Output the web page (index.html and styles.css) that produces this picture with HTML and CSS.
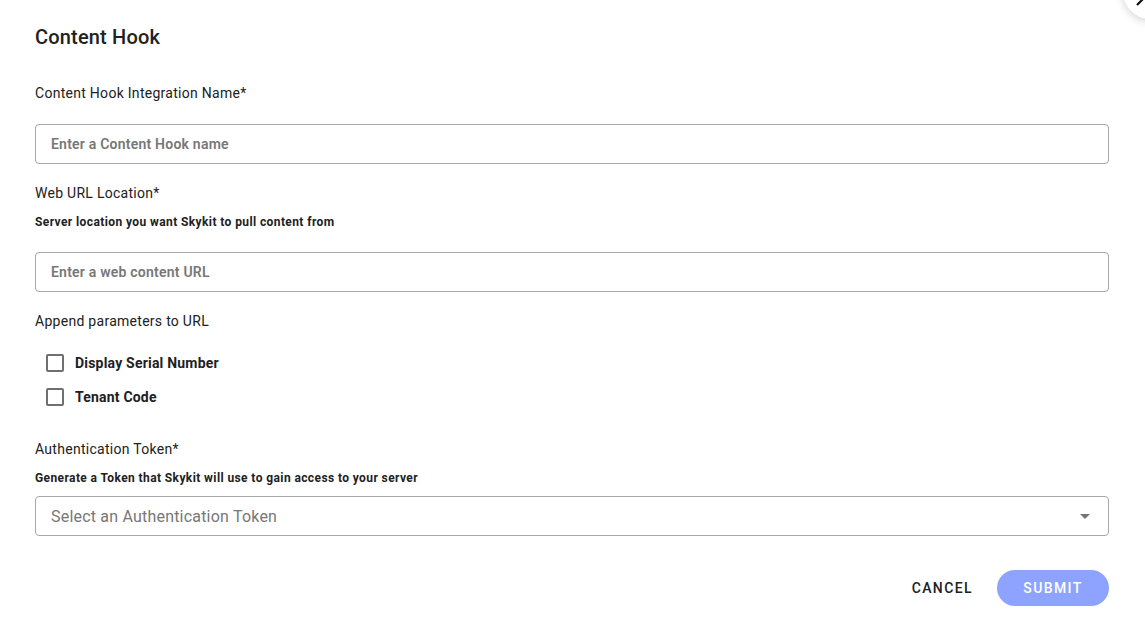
FILE: index.html
```html
<!DOCTYPE html>
<html lang="en">
<head>
<meta charset="utf-8">
<title>Content Hook</title>
<link rel="stylesheet" href="styles.css">
</head>
<body>
<div class="dialog">
  <h1 class="title">Content Hook</h1>

  <label class="label label-first">Content Hook Integration Name*</label>
  <div class="field field-after-label"><span class="placeholder">Enter a Content Hook name</span></div>

  <label class="label label-next">Web URL Location*</label>
  <p class="helper">Server location you want Skykit to pull content from</p>
  <div class="field field-after-helper"><span class="placeholder">Enter a web content URL</span></div>

  <label class="label label-next">Append parameters to URL</label>
  <div class="checks">
    <div class="check-row"><span class="box"></span><span class="check-text">Display Serial Number</span></div>
    <div class="check-row"><span class="box"></span><span class="check-text">Tenant Code</span></div>
  </div>

  <label class="label label-auth">Authentication Token*</label>
  <p class="helper">Generate a Token that Skykit will use to gain access to your server</p>
  <div class="field select"><span class="select-text">Select an Authentication Token</span><span class="arrow"></span></div>

  <div class="actions">
    <button class="btn btn-text">CANCEL</button>
    <button class="btn btn-primary">SUBMIT</button>
  </div>
</div>
<div class="close">
  <svg width="54" height="54" viewBox="0 0 54 54"><path d="M14 40 L40 14 M14 14 L40 40" stroke="#111" stroke-width="2.2" fill="none"/></svg>
</div>
</body>
</html>
```
FILE: styles.css
```css
html, body {
  margin: 0;
  padding: 0;
  background: #fff;
  overflow: hidden;
}
body {
  font-family: Roboto, "Liberation Sans", sans-serif;
  color: #212121;
  width: 1145px;
  height: 639px;
  position: relative;
}
.dialog {
  padding: 25px 36px 0 35px;
  display: flex;
  flex-direction: column;
}
.title {
  margin: 0;
  font-size: 20px;
  line-height: 24px;
  font-weight: 500;
  letter-spacing: 0.18px;
  color: #212121;
}
.label {
  display: block;
  font-size: 14px;
  line-height: 20px;
  font-weight: 400;
  letter-spacing: 0.28px;
  color: #212121;
}
.label-first { margin-top: 34px; }
.label-next { margin-top: 19px; }
.label-auth { margin-top: 25px; }
.helper {
  margin: 11px 0 0;
  font-size: 12px;
  line-height: 16px;
  font-weight: 700;
  letter-spacing: 0.4px;
  color: #212121;
}
.field {
  box-sizing: border-box;
  height: 40px;
  border: 1px solid #a8a8a8;
  border-radius: 4px;
  display: flex;
  align-items: center;
  padding: 0 15px;
}
.field-after-label { margin-top: 21px; }
.field-after-helper { margin-top: 22px; }
.placeholder {
  font-size: 14px;
  font-weight: 600;
  letter-spacing: 0.22px;
  color: #777;
}
.select {
  margin-top: 10px;
  justify-content: space-between;
  padding-right: 18px;
}
.select-text {
  font-size: 16px;
  font-weight: 400;
  letter-spacing: 0.2px;
  color: #777;
}
.arrow {
  width: 0;
  height: 0;
  border-left: 5px solid transparent;
  border-right: 5px solid transparent;
  border-top: 5px solid #757575;
}
.checks {
  margin-top: 15px;
  display: flex;
  flex-direction: column;
  padding-left: 11px;
}
.check-row {
  height: 34px;
  display: flex;
  align-items: center;
  gap: 11px;
}
.box {
  box-sizing: border-box;
  width: 18px;
  height: 18px;
  border: 2px solid #6f6f6f;
  border-radius: 2px;
}
.check-text {
  font-size: 14px;
  font-weight: 700;
  letter-spacing: 0.2px;
  color: #212121;
}
.actions {
  margin-top: 34px;
  display: flex;
  justify-content: flex-end;
  align-items: center;
  gap: 14px;
}
.btn {
  font-family: Roboto, "Liberation Sans", sans-serif;
  font-size: 14px;
  font-weight: 500;
  letter-spacing: 1.4px;
  border: none;
  height: 36px;
  border-radius: 18px;
  cursor: pointer;
}
.btn-text {
  background: transparent;
  color: #212121;
  padding: 0 10px;
}
.btn-primary {
  background: #8da3ff;
  color: #fff;
  width: 112px;
  padding: 0;
}
.close {
  position: absolute;
  left: 1123px;
  top: -35px;
  width: 54px;
  height: 54px;
  border-radius: 50%;
  background: #fff;
  box-shadow: 0 2px 8px rgba(0,0,0,0.18);
}
.close svg { display: block; }
```
